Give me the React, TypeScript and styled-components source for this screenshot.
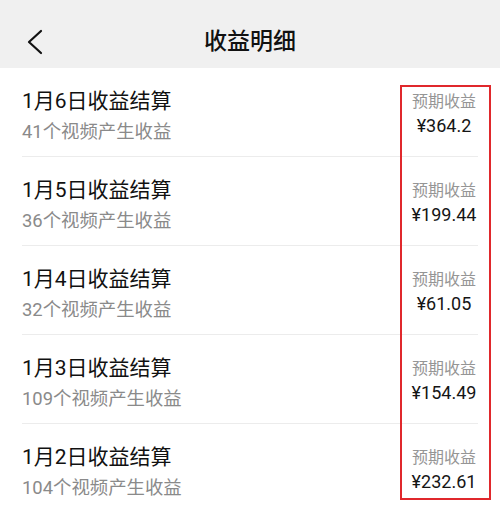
import React from "react";
import styled, { createGlobalStyle } from "styled-components";

const Global = createGlobalStyle`
  html, body { margin: 0; padding: 0; background: #ffffff; }
  body { font-family: Roboto, "Noto Sans CJK SC", "Noto Sans", sans-serif; }
  * { box-sizing: border-box; }
`;

const Page = styled.div`
  width: 500px;
  height: 514px;
  overflow: hidden;
  background: #ffffff;
`;

const Header = styled.header`
  height: 68px;
  padding-top: 16px;
  background: #f0f0f0;
  display: grid;
  grid-template-columns: 1fr auto 1fr;
  align-items: center;
`;

const BackButton = styled.div`
  display: flex;
  align-items: center;
  padding-left: 26px;
`;

const Title = styled.h1`
  margin: 0;
  font-size: 23px;
  line-height: 30px;
  font-weight: 500;
  color: #111111;
`;

const List = styled.div`
  position: relative;
`;

const Row = styled.div<{ $last?: boolean }>`
  height: 89px;
  margin: 0 22px;
  display: flex;
  justify-content: space-between;
  border-bottom: ${(p) => (p.$last ? "none" : "1px solid #ececec")};
`;

const Left = styled.div`
  padding-top: 19px;
  display: flex;
  flex-direction: column;
  align-items: flex-start;
  gap: 5px;
`;

const RowTitle = styled.div`
  font-size: 21px;
  line-height: 28px;
  color: #111111;
`;

const RowSub = styled.div`
  font-size: 18.4px;
  line-height: 24px;
  color: #8a8a8a;
`;

const Right = styled.div`
  padding-top: 23px;
  width: 68px;
  display: flex;
  flex-direction: column;
  align-items: center;
  gap: 1px;
`;

const Label = styled.div`
  font-size: 16px;
  line-height: 22px;
  color: #959595;
  white-space: nowrap;
`;

const Amount = styled.div`
  font-size: 18px;
  line-height: 24px;
  color: #151515;
  white-space: nowrap;
`;

const Highlight = styled.div`
  position: absolute;
  left: 400px;
  top: 17px;
  width: 91px;
  height: 415px;
  border: 2px solid #e0282c;
  pointer-events: none;
`;

const rows = [
  { date: "1月6日收益结算", count: "41个视频产生收益", amount: "¥364.2" },
  { date: "1月5日收益结算", count: "36个视频产生收益", amount: "¥199.44" },
  { date: "1月4日收益结算", count: "32个视频产生收益", amount: "¥61.05" },
  { date: "1月3日收益结算", count: "109个视频产生收益", amount: "¥154.49" },
  { date: "1月2日收益结算", count: "104个视频产生收益", amount: "¥232.61" },
];

export default function App() {
  return (
    <Page>
      <Global />
      <Header>
        <BackButton>
          <svg width="18" height="26" viewBox="0 0 18 26">
            <polyline
              points="15,2 3,13 15,24"
              fill="none"
              stroke="#111"
              strokeWidth="2.2"
              strokeLinecap="round"
              strokeLinejoin="round"
            />
          </svg>
        </BackButton>
        <Title>收益明细</Title>
        <div />
      </Header>
      <List>
        {rows.map((r, i) => (
          <Row key={r.date} $last={i === rows.length - 1}>
            <Left>
              <RowTitle>{r.date}</RowTitle>
              <RowSub>{r.count}</RowSub>
            </Left>
            <Right>
              <Label>预期收益</Label>
              <Amount>{r.amount}</Amount>
            </Right>
          </Row>
        ))}
        <Highlight />
      </List>
    </Page>
  );
}
